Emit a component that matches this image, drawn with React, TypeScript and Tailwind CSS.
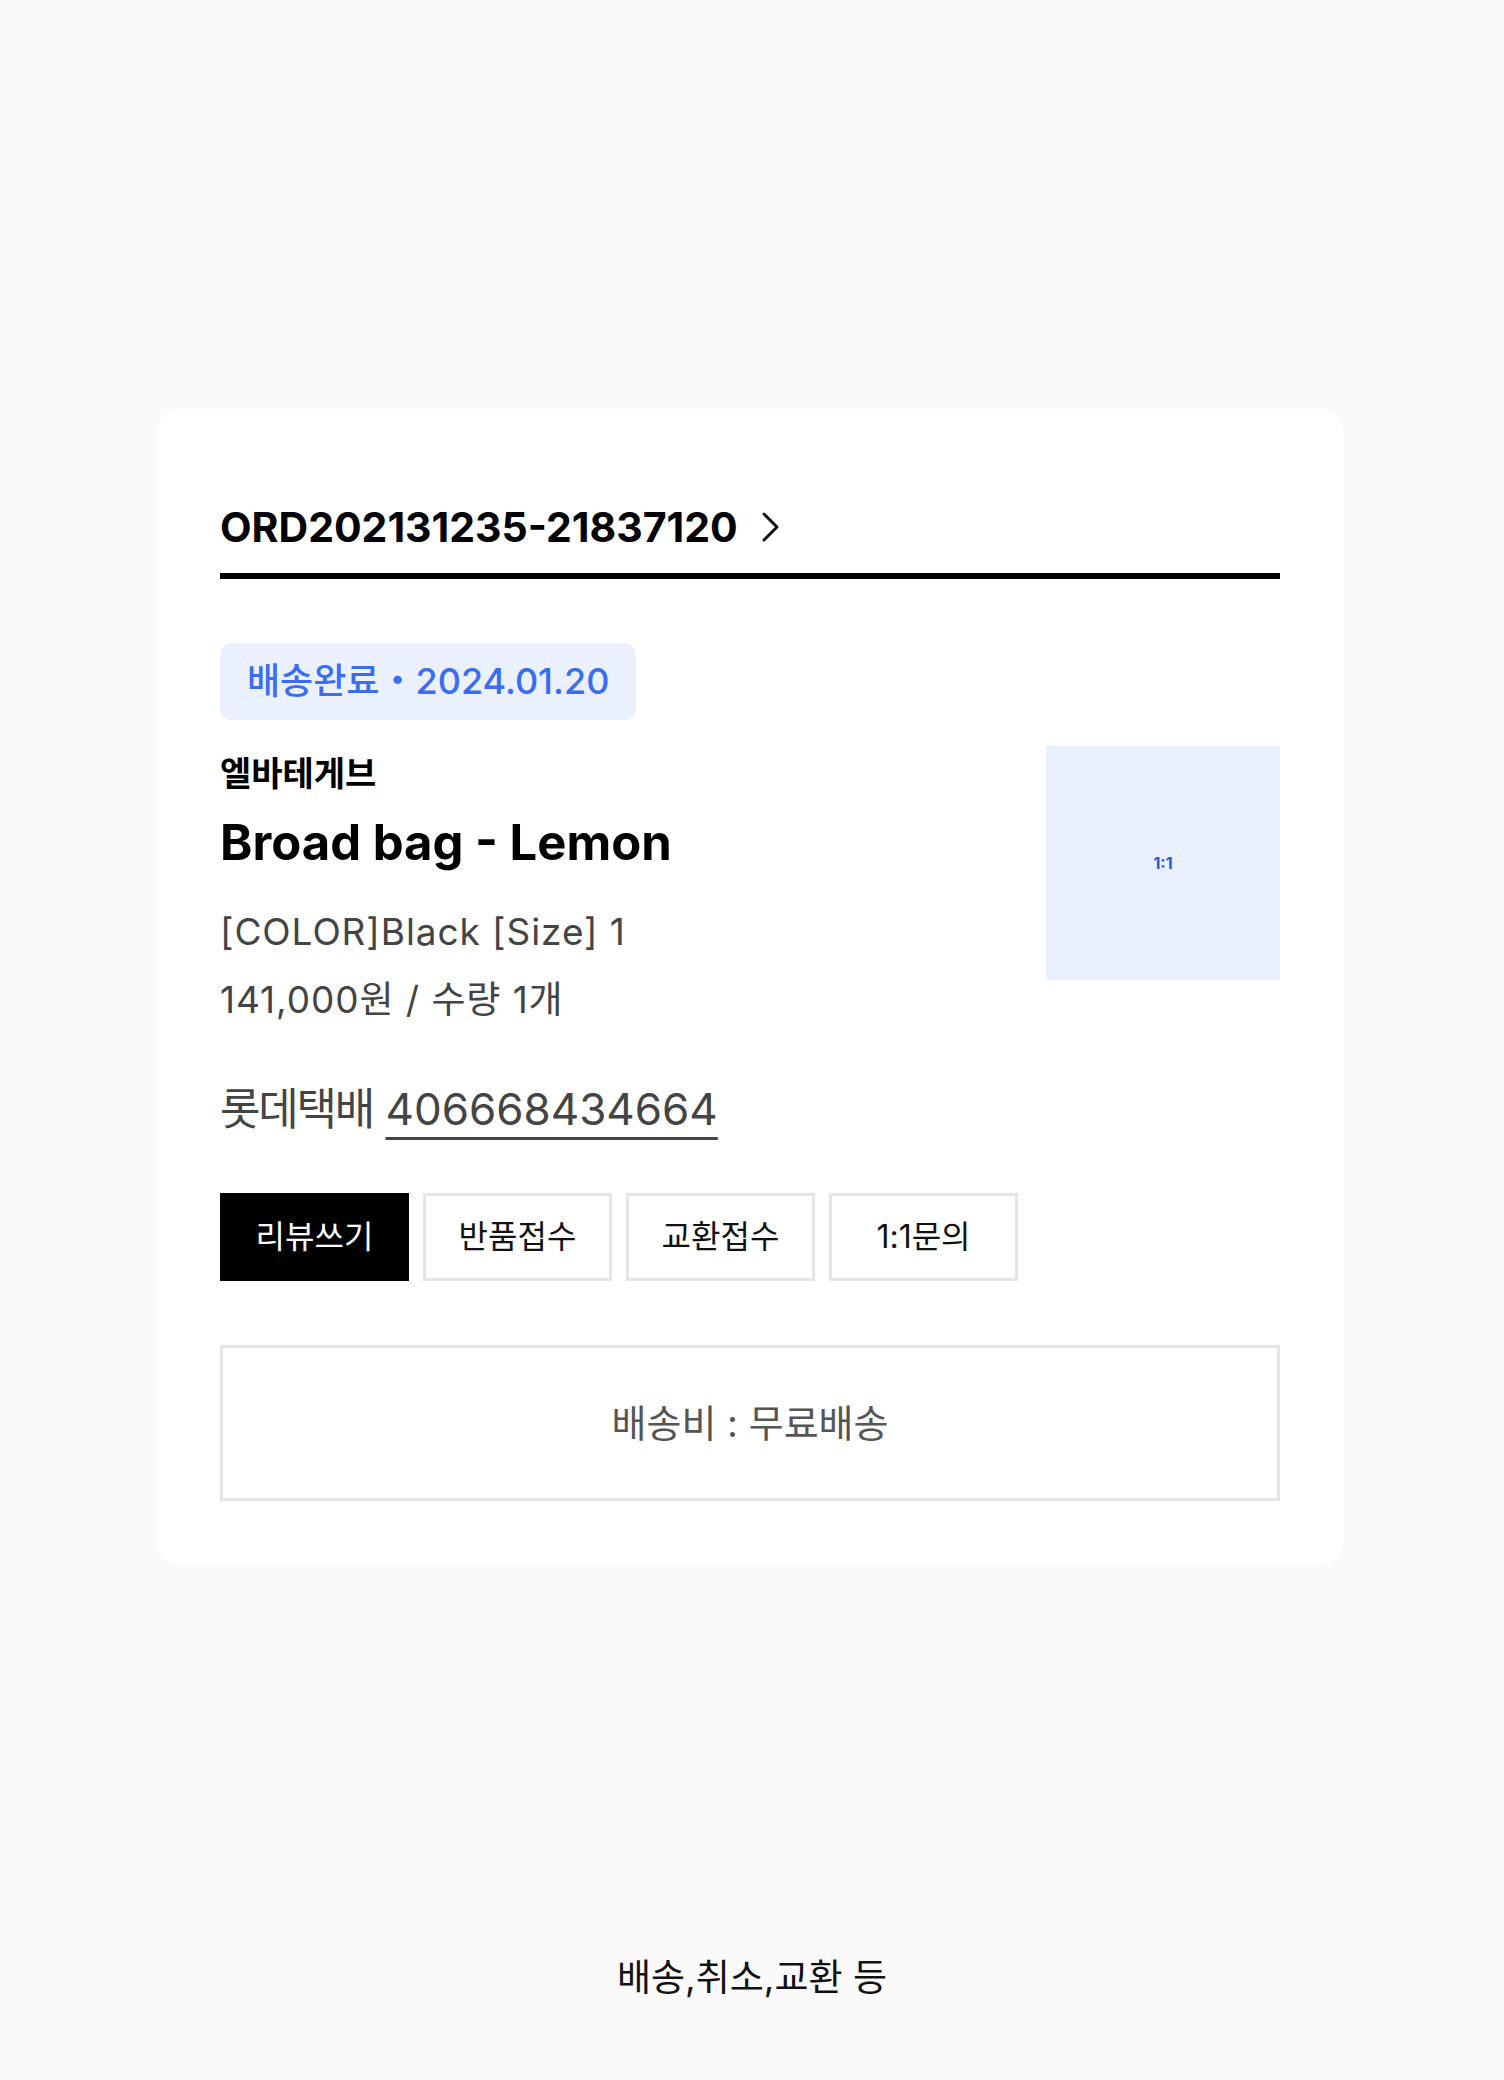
import React from 'react';

const actions = ['리뷰쓰기', '반품접수', '교환접수', '1:1문의'];

function ChevronRight() {
  return (
    <svg width="17" height="30" viewBox="0 0 17 30" fill="none" className="shrink-0">
      <polyline points="2,2 15,15 2,28" stroke="#111" strokeWidth="3" strokeLinecap="round" strokeLinejoin="round" />
    </svg>
  );
}

export default function App() {
  return (
    <div
      className="min-h-[2080px] w-full bg-[#fafafa] pt-[409px]"
      style={{ fontFamily: 'Inter, "Noto Sans CJK KR", sans-serif' }}
    >
      <section className="ml-[156px] w-[1188px] rounded-3xl bg-white px-16 pt-[88px] pb-16">
        {/* order number */}
        <div className="flex items-center gap-6 border-b-[6px] border-black pb-4">
          <h2 className="text-[41px] font-bold leading-[60px] text-black">ORD202131235-21837120</h2>
          <ChevronRight />
        </div>

        <div className="mt-16 inline-flex rounded-xl bg-[#ebf0ff] px-[27px] py-3">
          <span className="text-[36px] font-medium leading-[53px] text-[#3a6cf4]">배송완료・2024.01.20</span>
        </div>

        <div className="mt-[26px] flex items-start justify-between">
          <div className="flex flex-col">
            <p className="pt-[6px] text-[34px] font-bold leading-[44px] text-black">엘바테게브</p>
            <h3 className="mt-[17px] text-[49px] font-bold leading-[60px] text-black">Broad bag - Lemon</h3>
            <p className="mt-[25px] text-[37px] leading-[68px] tracking-[0.025em] text-[#444]">[COLOR]Black [Size] 1</p>
            <p className="text-[37px] leading-[68px] tracking-[0.025em] text-[#444]">141,000원 / 수량 1개</p>
          </div>
          <div className="flex h-[234px] w-[234px] shrink-0 items-center justify-center bg-[#ebf0ff]">
            <span className="text-[16px] font-bold text-[#2b55e6]">1:1</span>
          </div>
        </div>

        <p className="mt-[45px] text-[44px] leading-[60px] text-[#444]">
          <span className="tracking-[-0.05em]">롯데택배</span>{' '}
          <span className="underline decoration-[3px] underline-offset-[12px]">406668434664</span>
        </p>

        <div className="mt-[54px] flex gap-[14px]">
          {actions.map((label, i) => (
            <button
              key={label}
              className={
                i === 0
                  ? 'flex h-[88px] w-[189px] items-center justify-center bg-black text-[32px] text-white'
                  : 'flex h-[88px] w-[189px] items-center justify-center border-[3px] border-[#e5e5e5] bg-white text-[32px] text-[#111]'
              }
            >
              {label}
            </button>
          ))}
        </div>

        <div className="mt-16 flex h-[156px] items-center justify-center border-[3px] border-[#e5e5e5]">
          <span className="text-[38px] text-[#555]">배송비 : 무료배송</span>
        </div>
      </section>

      <p className="mt-[386px] text-center text-[37px] leading-[54px] text-[#111]">배송,취소,교환 등</p>
    </div>
  );
}
